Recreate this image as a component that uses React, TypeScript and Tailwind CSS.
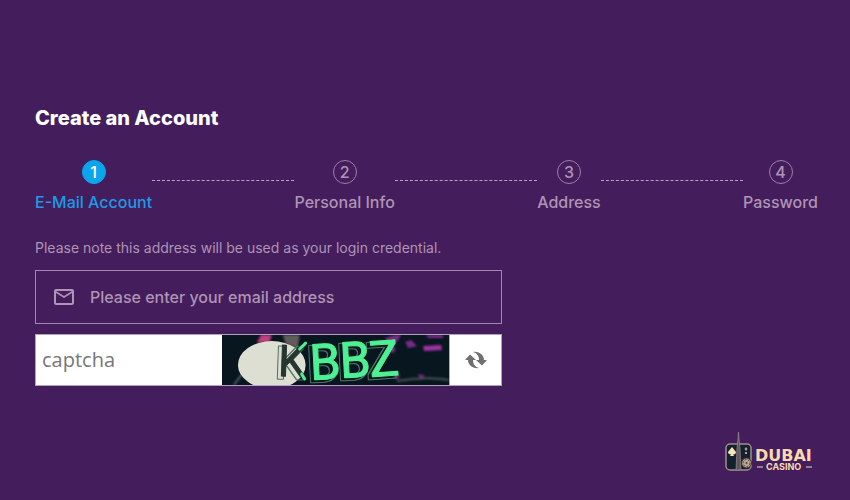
import { useState } from "react";
import { MdMailOutline } from "react-icons/md";

const steps = ["E-Mail Account", "Personal Info", "Address", "Password"];

function Steps({ current }: { current: number }) {
  return (
    <ol className="flex mt-7">
      {steps.map((label, i) => (
        <li key={label} className={i > 0 ? "flex flex-auto" : "flex"}>
          {i > 0 && (
            <span className="flex-1 mt-5 h-px border-t border-dashed border-[#b9a0c4]" />
          )}
          <div
            className={`flex flex-col items-center gap-1.5 ${
              i === current ? "text-[#1c9be6]" : "text-[#af94b5]"
            }`}
          >
            <span
              className={`flex size-6 items-center justify-center rounded-full border ${
                i === current
                  ? "border-[#0aa5ec] bg-[#0aa5ec] text-white"
                  : "border-[#9c7dab]"
              }`}
            >
              {i + 1}
            </span>
            <span className="leading-6 whitespace-nowrap">{label}</span>
          </div>
        </li>
      ))}
    </ol>
  );
}

function CaptchaImage() {
  return (
    <svg
      className="min-w-0 flex-1 overflow-visible bg-[#08161f]"
      height="50"
      viewBox="0 0 228 50"
      role="img"
      aria-label="Captcha image"
    >
      <defs>
        <filter id="soft">
          <feGaussianBlur stdDeviation="1" />
        </filter>
        <filter id="echo" x="-10%" y="-10%" width="120%" height="120%">
          <feMorphology in="SourceAlpha" operator="dilate" radius="0.6" result="wide" />
          <feComposite in="wide" in2="SourceAlpha" operator="out" result="ring" />
          <feOffset in="ring" dx="-3" dy="2" result="moved" />
          <feFlood floodColor="#4b7364" />
          <feComposite in2="moved" operator="in" result="line" />
          <feMerge>
            <feMergeNode in="line" />
            <feMergeNode in="SourceGraphic" />
          </feMerge>
        </filter>
        <clipPath id="frame">
          <rect width="228" height="50" />
        </clipPath>
      </defs>
      <g clipPath="url(#frame)">
        <g filter="url(#soft)">
          <path d="M35 8L39 0h11l-2 7z" fill="#c2417f" />
          <path d="M61 0h17l-2 14-12-5z" fill="#5f5b5c" />
          <path d="M24 34L12 50" stroke="#6a7076" strokeWidth="1.5" />
          <path d="M164 3l10-3h6l-5 8-9 2zM184 7l6-2 6 6-9 2z" fill="#7a2c88" />
          <path d="M170 13l4-1-1 5-4 1z" fill="#8c3598" />
          <path d="M202 11l18-1 1 5-18 1z" fill="#a133a5" />
          <path d="M205 0h17v3h-15z" fill="#7b2b88" />
          <path d="M171 42l8-4-2 7zM196 39l8 1-4 4z" fill="#702b79" />
          <path d="M176 46Q205 41 228 45" stroke="#5b6464" strokeWidth="1.5" fill="none" />
        </g>
        <ellipse cx="50" cy="30" rx="34" ry="24" fill="#dedfd3" />
      </g>
      <text
        x="56 89 119 149"
        y="41 45 43 42"
        rotate="2 -3 -3 -4"
        fontFamily="Roboto, sans-serif"
        fontSize="50"
        fontWeight="400"
        fill="#4df092"
        stroke="#4df092"
        strokeWidth="1"
        strokeLinejoin="round"
        filter="url(#echo)"
      >
        <tspan fill="#26352f" stroke="#26352f" fontSize="44">K</tspan>BBZ
      </text>
      <path
        d="M84 8l-6 6M80 39l3 5"
        stroke="#4df092"
        strokeWidth="3"
        strokeLinecap="round"
      />
    </svg>
  );
}

function RefreshIcon() {
  return (
    <svg width="22" height="20" viewBox="0 0 22 20" fill="#6f6f6f" aria-hidden="true">
      <path d="M5 4.5L0 10h3c0 5 5 9 11 8-4-1-6-4-6-8h3z" />
      <path d="M5 4.5L0 10h3c0 5 5 9 11 8-4-1-6-4-6-8h3z" transform="rotate(180 11 10)" />
    </svg>
  );
}

function Logo() {
  return (
    <svg width="90" height="40" viewBox="0 0 90 40" role="img" aria-label="Dubai Casino">
      <rect x="2" y="12" width="25" height="26" rx="4" fill="#13212f" stroke="#a08f8a" strokeWidth="1.5" />
      <path d="M12 38l1-22 1-9 .5-7 .5 7 1 9 1 22z" fill="#5d5661" stroke="#a8988e" strokeWidth=".6" />
      <path d="M8 15l4 5c0 2-2 3-3 2l1 2H6l1-2c-2 1-3-1-3-2z" fill="#f7e4bb" />
      <path d="M22 15l1.5 2-1.5 2-1.5-2zM21 20h2v2h-2z" fill="#a5a5a5" />
      <circle cx="22.5" cy="31" r="5" fill="#b8a58e" stroke="#332d37" />
      <circle cx="22.5" cy="31" r="3.5" fill="none" stroke="#4b4247" strokeDasharray="2 1.5" />
      <circle cx="22.5" cy="31" r="1" fill="#4b4247" />
      <g fill="#f8d9ae" fontWeight="700">
        <text x="31" y="29" fontSize="16" fontFamily="'DejaVu Sans', sans-serif">
          DUBAI
        </text>
        <text x="42" y="38" fontSize="9" fontFamily="Inter, sans-serif">
          CASINO
        </text>
      </g>
      <path d="M33 35h6M82 35h6" stroke="#f8d9ae" />
    </svg>
  );
}

export default function App() {
  const [email, setEmail] = useState("");
  const [captcha, setCaptcha] = useState("");

  return (
    <div className="flex min-h-screen flex-col bg-[#441d5c] pt-26 pr-8 pl-[35px] font-['Inter',sans-serif] font-medium text-[#af94b5]">
      <h1 className="text-xl font-extrabold text-white">Create an Account</h1>
      <Steps current={0} />

      <form className="mt-6 max-w-[467px]" onSubmit={(e) => e.preventDefault()}>
        <p className="text-sm font-normal">
          Please note this address will be used as your login credential.
        </p>
        <label className="mt-3 flex items-center gap-3.5 border border-[#a584b3] px-4">
          <MdMailOutline size={24} aria-hidden="true" />
          <input
            type="email"
            aria-label="Email address"
            placeholder="Please enter your email address"
            value={email}
            onChange={(e) => setEmail(e.target.value)}
            className="min-w-0 flex-1 py-3.5 outline-none placeholder:text-[#af94b5]"
          />
        </label>

        <div className="mt-2.5 flex items-stretch border border-[#b1a3bd] bg-white">
          <input
            type="text"
            aria-label="captcha"
            placeholder="captcha"
            value={captcha}
            onChange={(e) => setCaptcha(e.target.value)}
            className="w-2/5 px-1.5 font-['Open_Sans',sans-serif] text-xl font-normal text-gray-700 outline-none placeholder:text-[#777777]"
          />
          <CaptchaImage />
          <button
            type="button"
            aria-label="Refresh captcha"
            onClick={() => setCaptcha("")}
            className="flex w-13 items-center justify-center border-l border-[#b1a3bd]"
          >
            <RefreshIcon />
          </button>
        </div>
      </form>

      <div className="mt-auto flex justify-end pr-1 pb-7">
        <Logo />
      </div>
    </div>
  );
}
